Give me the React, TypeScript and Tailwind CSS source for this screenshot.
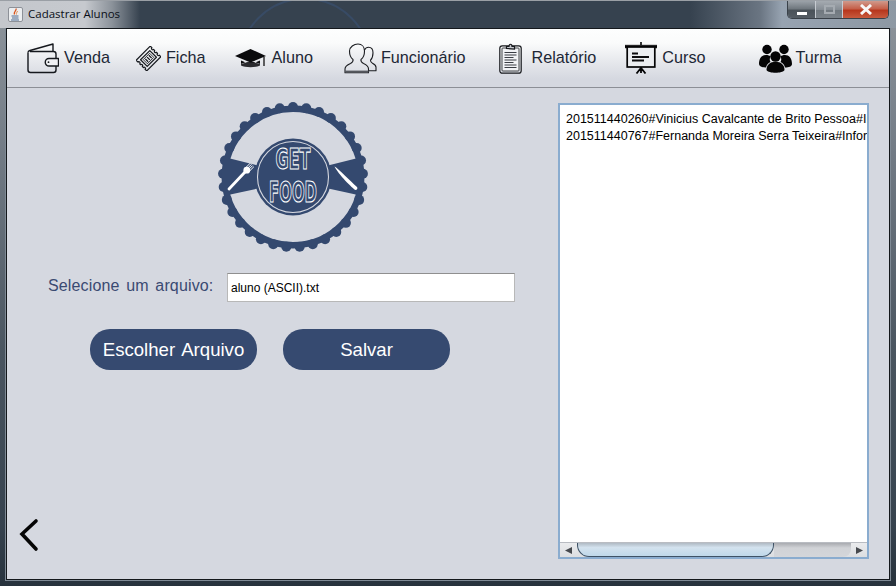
import React from "react";

const ink = "#15181d";

function Wallet() {
  return (
    <svg width="32" height="31" viewBox="0 0 32 31" fill="none" stroke={ink} strokeWidth="1.4" strokeLinejoin="round">
      <path d="M1 9.5C1 8.5 2 7.8 3 7.5L26 1v7.5" />
      <path d="M1 9.5V27c0 1.5 1 2.5 2.5 2.5h23c1.5 0 2.500-1 2.500-2.500v-4" />
      <path d="M3 8.500h23.500c1.500 0 2.500 1 2.500 2.500v4.200" />
      <path d="M22 15.500h9.500v7.500H22a3.750 3.750 0 0 1 0-7.500z" fill="#f0f1f4" />
      <circle cx="21.500" cy="19.200" r="0.900" fill={ink} stroke="none" />
    </svg>
  );
}

function Ticket() {
  return (
    <svg width="25" height="25" viewBox="0 0 25 25" fill="none" stroke={ink} strokeLinejoin="round">
      <g transform="rotate(-45 12.500 12.500)">
        <path
          d="M2.500 5h20v2.300a1.200 1.200 0 0 0 0 2.400v1.600a1.200 1.200 0 0 0 0 2.400v1.600a1.200 1.200 0 0 0 0 2.400V20h-20v-2.300a1.200 1.200 0 0 0 0-2.400v-1.600a1.200 1.200 0 0 0 0-2.400V10.100a1.200 1.200 0 0 0 0-2.400z"
          strokeWidth="1.200"
        />
        <rect x="6" y="7.800" width="13" height="9.400" strokeWidth="1.200" />
        <rect x="8" y="9.600" width="9" height="5.800" strokeWidth="0.800" />
        <path d="M10 10.500v4M12.500 10.500v4M15 10.500v4" strokeWidth="1.300" />
      </g>
    </svg>
  );
}

function Cap() {
  return (
    <svg width="32" height="24" viewBox="0 0 32 24" fill="none">
      <path d="M0 10L15.500 3 31 10 15.500 16.500z" fill="#0b0b0d" />
      <path d="M6 14.500v3.500c3-2.700 16-2.700 19 0v-3.500l-9.500 4z" fill="#0b0b0d" />
      <path d="M6 18.200c3-2.200 16-2.200 19 0v1.300c-4 2.300-15 2.300-19 0z" fill="#2a2a2e" />
      <path d="M29 11v9" stroke="#222" strokeWidth="1.400" />
    </svg>
  );
}

function People() {
  return (
    <svg width="33" height="31" viewBox="0 0 33 31" fill="none" stroke="#1a1c20" strokeWidth="1.100" strokeLinejoin="round">
      <path d="M20.500 7c1-2 2.500-2.800 4-2.800 3 0 4.500 2.500 4.500 5.500 0 3.500-1 6-2.500 7.500 0 1.500.5 2.200 2 3 2 1 3.500 2 3.500 4v3.600H24" />
      <path d="M14 1c4 0 6.500 3 6.500 7 0 4-1.500 7-3.500 8.500-.5 2 .5 3 2.500 4 3 1.300 5 2.700 5 5.500v3.800H1V26c0-2.800 2.500-4.200 5.500-5.500 2-1 3-2 2.500-4C7 15 5.500 12 5.500 8c0-4 4.500-7 8.500-7z" />
      <path d="M1 28.500h23.500" strokeWidth="1.800" stroke="#55585e" />
    </svg>
  );
}

function Clipboard() {
  return (
    <svg width="23" height="32" viewBox="0 0 23 32" fill="none" stroke="#17191d" strokeWidth="1.200">
      <rect x="0.800" y="3.800" width="21.400" height="27.400" rx="2.500" />
      <rect x="3" y="6" width="17" height="23" rx="0.800" strokeWidth="0.800" fill="#f1f2f5" />
      <path d="M7.500 6.500V4.500h2.500c0-3 3-3 3 0h2.500v2.500z" fill="#c8cad0" />
      <path d="M5.500 10.500h12M5.500 13h12M5.500 15.500h9M5.500 18h12M5.500 20.500h9M5.500 23h12M5.500 25.500h12" strokeWidth="1.100" stroke="#3a3d44" />
    </svg>
  );
}

function Board() {
  return (
    <svg width="32" height="32" viewBox="0 0 32 32" fill="none" stroke="#050506">
      <path d="M16 0v3" strokeWidth="1.600" />
      <path d="M0 3.200h32v2.700H0z" fill="#050506" strokeWidth="0.500" />
      <rect x="2.200" y="5" width="27.600" height="20" strokeWidth="1.700" fill="#eceef1" />
      <path d="M7 11.500h6M7 15h17M7 18.500h12" strokeWidth="1.800" stroke="#0c0c0e" />
      <path d="M16 25v2M15.500 26.500l-4 5M16.500 26.500l4 5M16 26v5" strokeWidth="1.800" />
    </svg>
  );
}

function Team() {
  return (
    <svg width="33" height="29" viewBox="0 0 33 29" fill="#050506">
      <circle cx="8" cy="5.500" r="4.700" />
      <circle cx="25" cy="5.500" r="4.700" />
      <path d="M0 20c0-6 3-9 7-9 2 0 3.500.5 4.500 1.500-1 2-1 4 0 5.500-2.500 1-4 3-4.500 5.500C3 23.500 0 22.500 0 20z" />
      <path d="M33 20c0-6-3-9-7-9-2 0-3.500.5-4.500 1.500 1 2 1 4 0 5.500 2.500 1 4 3 4.500 5.500 4 0 7-1 7-3.500z" />
      <circle cx="16.500" cy="12.500" r="5.200" />
      <path d="M7.500 26c0-5 3.500-8.200 9-8.200s9 3.200 9 8.200c-2 3.700-16 3.700-18 0z" />
    </svg>
  );
}

const knots = Array.from({ length: 33 }, (_, i) => {
  const a = (i / 33) * Math.PI * 2 - Math.PI / 2;
  return { x: 75 + 70 * Math.cos(a), y: 75 + 70 * Math.sin(a) };
});

function Logo() {
  const navy = "#34496f";
  return (
    <svg width="150" height="150" viewBox="0 0 150 150">
      {knots.map((k, i) => (
        <circle key={i} cx={k.x} cy={k.y} r="5" fill={navy} />
      ))}
      <circle cx="75" cy="75" r="68.200" fill="none" stroke={navy} strokeWidth="6.500" />
      <path d="M10 56L42 64V86L10 93z" fill={navy} />
      <path d="M140 56L108 64V86L140 93z" fill={navy} />
      <circle cx="75" cy="75" r="38.500" fill={navy} />
      <circle cx="75" cy="75" r="35.500" fill="none" stroke="#d5d8e0" strokeWidth="1.100" />
      <text x="75" y="67" textAnchor="middle" fontFamily="'DejaVu Sans', sans-serif" fontWeight="700" fontSize="29" textLength="35" lengthAdjust="spacingAndGlyphs" fill="none" stroke="#ffffff" strokeWidth="1.200">GET</text>
      <text x="75" y="100" textAnchor="middle" fontFamily="'DejaVu Sans', sans-serif" fontWeight="700" fontSize="29" textLength="48" lengthAdjust="spacingAndGlyphs" fill="none" stroke="#ffffff" strokeWidth="1.200">FOOD</text>
      <g stroke="#fff" fill="none" strokeLinecap="round">
        <path d="M11 87L27 70" strokeWidth="2.800" />
        <path d="M28.200 65.200L32 61.400M29.400 66.400L33.200 62.600M30.600 67.600L34.400 63.800M31.800 68.800L35.600 65" strokeWidth="1" />
      </g>
      <circle cx="28.800" cy="68.200" r="3.400" fill="#fff" />
      <path d="M116.500 64.500C121 67 132 79 139 85C140 86 139 88 137.500 88C135 87 120 72 116.500 64.500z" fill="#fff" />
    </svg>
  );
}

const items = [
  { label: "Venda", icon: <Wallet />, cls: "ml-[20px] gap-[5px]" },
  { label: "Ficha", icon: <Ticket />, cls: "ml-[26px] gap-[5px]" },
  { label: "Aluno", icon: <Cap />, cls: "ml-[29px] gap-[5px]" },
  { label: "Funcionário", icon: <People />, cls: "ml-[31px] gap-[4px]" },
  { label: "Relatório", icon: <Clipboard />, cls: "ml-[33px] gap-[10px]" },
  { label: "Curso", icon: <Board />, cls: "ml-[29px] gap-[5px]" },
  { label: "Turma", icon: <Team />, cls: "ml-[53px] gap-[4px]" },
];

export default function App() {
  return (
    <div className="relative flex h-[586px] w-[896px] flex-col overflow-hidden bg-[linear-gradient(180deg,#8f969d_0%,#737c86_25%,#4a5560_60%,#36424e_90%,#27323c_100%)] font-['Liberation_Sans',sans-serif]">
      {/* title bar */}
      <div className="relative flex h-[28px] shrink-0 overflow-hidden border-t border-[#9a9fa5] bg-[linear-gradient(90deg,#c4c7cc_0px,#c6c9ce_85px,#8b929a_112px,#36424f_140px,#36424f_690px,#6a7582_760px,#97a3b1_782px,#8d98a3_896px)]">
        <div className="absolute left-[239px] top-[-3px] h-[130px] w-[132px] rounded-full border-2 border-[#384b65]" />
        <div className="relative ml-[8px] mt-[6px] flex h-[15px] w-[15px] items-center justify-center rounded-[2px] border border-[#8d9198] bg-[#eceef0]">
          <svg width="11" height="13" viewBox="0 0 11 13" fill="none">
            <path d="M6 0.500C7 2.500 3.500 3.500 4.500 6.500" stroke="#d8551f" strokeWidth="1.300" />
            <path d="M7.500 3C7 4.500 6 5 6.500 6.500" stroke="#e08a4a" strokeWidth="1" />
            <path d="M1.500 8h7M2 10h6.500M1 12h8" stroke="#4d6b91" strokeWidth="1" />
          </svg>
        </div>
        <span className="relative ml-[5px] mt-[5px] text-[11.5px] leading-[16px] text-[#0b0f18] font-['Open_Sans',sans-serif]">Cadastrar Alunos</span>
        <div className="relative ml-auto mr-[7px] flex h-[18px] w-[102px] overflow-hidden rounded-b-[5px] border border-t-0 border-[#3a4149] text-white">
          <div className="flex w-[28px] items-end justify-center border-r border-[#c7ccd2] bg-[linear-gradient(180deg,#9ba2a9,#70787f_45%,#4a5259_55%,#545c64)] pb-[3px]">
            <div className="h-[3px] w-[10px] bg-white" />
          </div>
          <div className="flex w-[27px] items-center justify-center border-r border-[#c7ccd2] bg-[linear-gradient(180deg,#a5abb1,#868d94_50%,#70787f_55%,#7b838a)]">
            <div className="h-[9px] w-[11px] border-2 border-[#a5abb1]" />
          </div>
          <div className="flex flex-1 items-center justify-center bg-[linear-gradient(180deg,#d09a8c,#c5604a_45%,#b7371d_55%,#c85a3e)]">
            <svg width="14" height="11" viewBox="0 0 14 11"><path d="M2 1l10 9M12 1l-10 9" stroke="#f7f7f7" strokeWidth="3" /></svg>
          </div>
        </div>
      </div>

      {/* client area */}
      <div className="mb-[6px] ml-[6px] mr-[6px] flex flex-1 flex-col border border-[#14181c] bg-[#d5d8e0] shadow-[0_0_0_1px_#7f8a95]">
        <nav className="flex h-[59px] shrink-0 items-center border-b border-[#8c8f96] bg-[linear-gradient(180deg,#fdfefe_0px,#fafbfb_14px,#e3e5ea_36px,#d5d8e0_50px)] text-[16.2px] leading-[20px] text-[#1d2735]">
          {items.map((it) => (
            <div key={it.label} className={`flex items-center ${it.cls}`}>
              {it.icon}
              <span className="mb-[2px]">{it.label}</span>
            </div>
          ))}
        </nav>

        <div className="flex flex-1">
          <div className="flex w-[551px] flex-col">
            <div className="ml-[211px] mt-[14px]"><Logo /></div>
            <div className="ml-[41px] mt-[21px] flex items-center">
              <span className="mb-[3px] w-[179px] text-[16px] leading-[20px] tracking-[0.15px] text-[#3a4a72]" style={{ wordSpacing: "2px" }}>Selecione um arquivo:</span>
              <div className="flex h-[29px] w-[288px] items-center border border-[#b8b8b8] border-t-[#8f8f8f] bg-white pl-[3px] text-[12px] text-black">aluno (ASCII).txt</div>
            </div>
            <div className="ml-[83px] mt-[27px] flex gap-[26px]">
              <button className="h-[41px] w-[167px] rounded-[20px] bg-[#364a70] text-[18.6px] text-white" style={{ wordSpacing: "2px" }}>Escolher Arquivo</button>
              <button className="h-[41px] w-[167px] rounded-[20px] bg-[#364a70] text-[18.6px] text-white">Salvar</button>
            </div>
            <svg className="mb-[27px] ml-[12px] mt-auto" width="20" height="34" viewBox="0 0 20 34" fill="none">
              <path d="M17 3L3 16l14 15" stroke="#050505" strokeWidth="3.600" strokeLinecap="round" strokeLinejoin="miter" />
            </svg>
          </div>

          <div className="mt-[15px] flex h-[456px] w-[311px] flex-col border-2 border-[#8aaccf] bg-white">
            <div className="flex-1 overflow-hidden whitespace-nowrap pl-[6px] pt-[6px] text-[12.5px] leading-[16.500px] text-black">
              <div>201511440260#Vinicius Cavalcante de Brito Pessoa#Informática</div>
              <div>201511440767#Fernanda Moreira Serra Teixeira#Informática</div>
            </div>
            <div className="flex h-[15px] shrink-0 border-t border-[#b9bcc2] bg-[linear-gradient(180deg,#eaebed,#dcdee1)]">
              <div className="flex w-[17px] items-center justify-center">
                <svg width="7" height="7" viewBox="0 0 7 7"><path d="M7 0v7L0 3.500z" fill="#46494e" /></svg>
              </div>
              <div className="h-[14px] w-[197px] rounded-b-[12px] border border-t-0 border-[#3e5266] bg-[linear-gradient(180deg,#b0bac4,#d3e2ee_35%,#bfd8ea_100%)]" />
              <div className="h-[14px] w-[77px] rounded-br-[8px] bg-[linear-gradient(180deg,#a9abb0,#d0d2d6_35%,#d4d6da)]" />
              <div className="flex flex-1 items-center justify-center">
                <svg width="7" height="7" viewBox="0 0 7 7"><path d="M0 0v7l7-3.500z" fill="#46494e" /></svg>
              </div>
            </div>
          </div>
        </div>
      </div>
    </div>
  );
}
